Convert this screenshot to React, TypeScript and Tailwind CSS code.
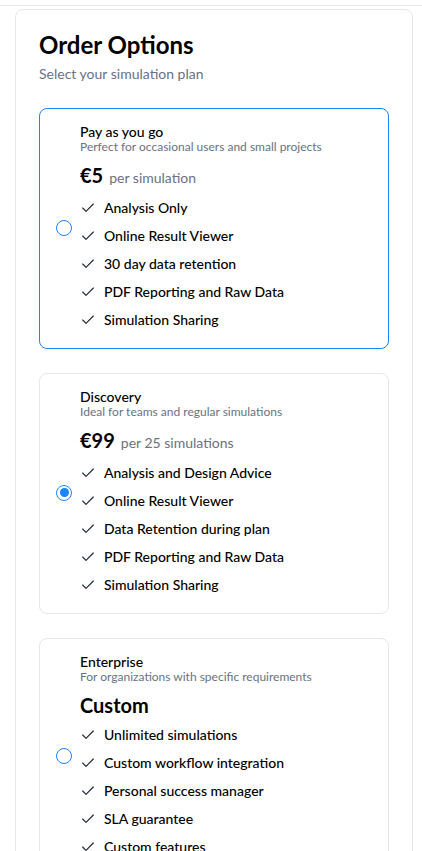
import { Check } from 'lucide-react'

type Plan = {
  name: string
  desc: string
  price: string
  unit?: string
  features: string[]
  selected?: boolean
  highlighted?: boolean
}

const PLANS: Plan[] = [
  {
    name: 'Pay as you go',
    desc: 'Perfect for occasional users and small projects',
    price: '€5',
    unit: 'per simulation',
    features: ['Analysis Only', 'Online Result Viewer', '30 day data retention', 'PDF Reporting and Raw Data', 'Simulation Sharing'],
    highlighted: true,
  },
  {
    name: 'Discovery',
    desc: 'Ideal for teams and regular simulations',
    price: '€99',
    unit: 'per 25 simulations',
    features: ['Analysis and Design Advice', 'Online Result Viewer', 'Data Retention during plan', 'PDF Reporting and Raw Data', 'Simulation Sharing'],
    selected: true,
  },
  {
    name: 'Enterprise',
    desc: 'For organizations with specific requirements',
    price: 'Custom',
    features: ['Unlimited simulations', 'Custom workflow integration', 'Personal success manager', 'SLA guarantee', 'Custom features'],
  },
]

function Radio({ checked }: { checked?: boolean }) {
  return (
    <span className="flex h-4 w-4 shrink-0 items-center justify-center rounded-full border-[1.5px] border-[#1a85ff] bg-white">
      {checked && <span className="h-[9px] w-[9px] rounded-full bg-[#1a85ff]" />}
    </span>
  )
}

function PlanCard({ plan }: { plan: Plan }) {
  return (
    <label
      className={`flex cursor-pointer items-center gap-2 rounded-lg border bg-white px-4 pt-4 pb-[18px] ${
        plan.highlighted ? 'border-[#1a85ff]' : 'border-gray-200'
      }`}>
      <Radio checked={plan.selected} />
      <div className="flex min-w-0 flex-1 flex-col">
        <div className="text-[14px] leading-[14px] font-medium text-black">{plan.name}</div>
        <div className="text-[12px] leading-4 text-gray-500">{plan.desc}</div>
        <div className="mt-[6px] flex items-baseline gap-1.5 leading-7">
          <span className="text-[20px] font-bold text-black">{plan.price}</span>
          {plan.unit && <span className="text-[14px] text-gray-500">{plan.unit}</span>}
        </div>
        <ul className="mt-1.5 flex flex-col gap-2">
          {plan.features.map((f) => (
            <li key={f} className="flex items-center gap-2 text-[14px] leading-5 font-medium text-black">
              <Check className="h-4 w-4 shrink-0 text-gray-800" strokeWidth={1.75} />
              {f}
            </li>
          ))}
        </ul>
      </div>
    </label>
  )
}

export default function App() {
  return (
    <div
      className="min-h-screen overflow-hidden bg-white"
      style={{ fontFamily: 'Lato, "Noto Sans", sans-serif' }}>
      <div className="h-[6px] border-b border-gray-200" />
      <div className="mt-[3px] ml-[15px] w-[398px] rounded-lg border border-gray-200 bg-white px-[23px] pt-[19px] pb-6">
        <h1 className="text-[24px] leading-8 font-bold text-black">Order Options</h1>
        <p className="mt-[3px] text-[14px] leading-5 text-gray-500">Select your simulation plan</p>
        <div className="mt-6 flex flex-col gap-6">
          {PLANS.map((p) => (
            <PlanCard key={p.name} plan={p} />
          ))}
        </div>
      </div>
    </div>
  )
}
